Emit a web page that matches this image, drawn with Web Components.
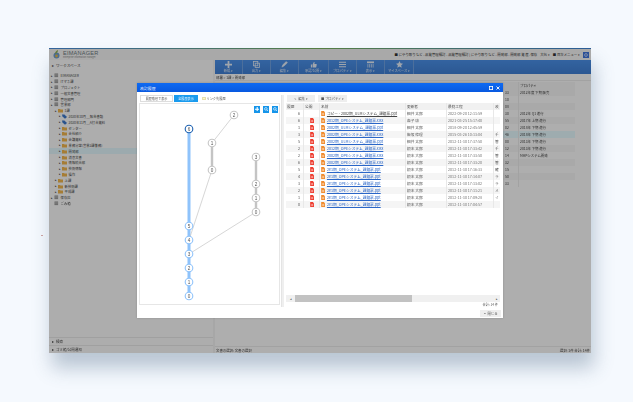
<!DOCTYPE html>
<html lang="ja">
<head>
<meta charset="utf-8">
<title>EIMANAGER</title>
<style>
  html, body { margin: 0; height: 100%; overflow: hidden; }
  body {
    background: #f5f9fe;
    padding: 48px 0 0 49px;
    box-sizing: border-box;
    font-family: "Noto Sans CJK JP", "Liberation Sans", sans-serif;
  }
  /* stray mark left of the window in the screenshot */
  .tick { position: absolute; left: 41px; top: 235px; width: 2px; height: 1px; background: #c9a0a0; }
</style>
</head>
<body>
<em-app></em-app>
<div class="tick"></div>
<script>
const FONT = '"Noto Sans CJK JP", "Liberation Sans", sans-serif';

class EmTopbar extends HTMLElement {
  connectedCallback() {
    this.attachShadow({ mode: 'open' });
    this.shadowRoot.innerHTML = `
      <style>
        :host { display: flex; align-items: center; height: 11px; background: #f2f2f2; padding: 0 2px 0 4px; color: #333; font-size: 3.4px; white-space: nowrap; }
        .logo { display: flex; align-items: center; gap: 3px; }
        .name { font: 400 5.6px "Liberation Sans", sans-serif; letter-spacing: .2px; color: #6b7880; line-height: 6px; }
        .sub { font-size: 2.2px; line-height: 3px; color: #888; }
        .right { margin-left: auto; display: flex; align-items: center; gap: 3px; }
        .gear { width: 6px; height: 6px; background: #3f73d8; display: block; }
      </style>
      <div class="logo">
        <svg width="7" height="9" viewBox="0 0 7 9"><circle cx="3.5" cy="5.5" r="3" fill="#6a9bd0"/><path d="M2 4c0-2 1-3 3-4 0 2-1 3-3 4z" fill="#8cb04a"/><circle cx="3.5" cy="6" r="1.4" fill="#e0b64c"/></svg>
        <div><div class="name">EIMANAGER</div><div class="sub">Enterprise Information Manager</div></div>
      </div>
      <div class="right">
        <span>■ にやり取りなど - 品質管理検討 - 品質管理検討 | にやり取りなど - 開発部 - 開発部 資 産. 保存</span>
        <span>大伝 ▾</span>
        <span>■ 目次メニュー ▾</span>
        <svg class="gear" viewBox="0 0 6 6"><rect width="6" height="6" fill="#3f73d8"/><circle cx="3" cy="3" r="1.4" fill="none" stroke="#dfe8fa" stroke-width=".7"/></svg>
      </div>`;
  }
}

class EmTreeRow extends HTMLElement {
  connectedCallback() {
    const level = +this.getAttribute('level');
    const kind = this.getAttribute('kind') || 'folder';
    const icons = {
      root: '<rect x=".5" y=".5" width="3.6" height="3.6" fill="#8c8c8c"/><path d="M.5 1.7h3.6M.5 2.9h3.6" stroke="#eee" stroke-width=".4"/>',
      folder: '<path d="M0 1h2l.5.6H5v3H0z" fill="#eeb34c"/>',
      tag: '<path d="M0 .6h2.4L5 3 3 4.8.4 2.4z" fill="#3d78c9"/>'
    };
    const arrow = this.hasAttribute('leaf') ? '' : '▸';
    this.attachShadow({ mode: 'open' });
    this.shadowRoot.innerHTML = `
      <style>
        :host { display: flex; align-items: center; height: 5.8px; font-size: 3.3px; color: #444; white-space: nowrap; padding-left: ${[2, 6, 10][level]}px; }
        :host([selected]) { background: #e0f4f9; }
        .arrow { width: 3px; font-size: 3px; color: #333; }
        svg { margin-right: 1.6px; flex: none; }
      </style>
      <span class="arrow">${arrow}</span>
      <svg width="5" height="5" viewBox="0 0 5 5">${icons[kind]}</svg>
      <slot></slot>`;
  }
}

class EmSidebar extends HTMLElement {
  connectedCallback() {
    const tree = [
      [0, 'root', 'EIMANAGER'], [0, 'root', 'ITマネ課'], [0, 'root', 'プロジェクト'],
      [0, 'root', '一般文書管理'], [0, 'root', '管理部門'], [0, 'root', '営業部'],
      [1, 'folder', '1課'],
      [2, 'tag', '2020年10月__報告書類'], [2, 'tag', '2020年11月__A打合資料'],
      [2, 'folder', 'センター'], [2, 'folder', '会社紹介'], [2, 'folder', '会議資料'],
      [2, 'folder', '業務分掌(営業2課兼務)'], [2, 'folder', '開発部', 'sel'],
      [2, 'folder', '消息文書'], [2, 'folder', '情報統合部'], [2, 'folder', '技術情報'], [2, 'folder', '操作'],
      [1, 'folder', '上課'], [1, 'folder', '新技術課'], [1, 'folder', '平成課'],
      [0, 'root', '保存庫'], [0, 'root', 'ごみ箱', 'leaf']
    ];
    this.attachShadow({ mode: 'open' });
    this.shadowRoot.innerHTML = `
      <style>
        :host { display: flex; flex-direction: column; width: 164px; background: #f8f8f8; font-size: 3.5px; color: #444; }
        .head { height: 10px; display: flex; align-items: center; padding-left: 3px; gap: 2px; font-size: 3.6px; }
        .tree { flex: 1; padding-top: 3px; }
        .acc { height: 8px; border-top: 1px solid #e6e6e6; display: flex; align-items: center; padding-left: 3px; gap: 2px; box-sizing: border-box; }
      </style>
      <div class="head"><span>▸</span><span>ワークスペース</span></div>
      <div class="tree">
        ${tree.map(([l, k, t, f]) => `<em-tree-row level="${l}" kind="${k}"${f === 'sel' ? ' selected' : ''}${f === 'leaf' ? ' leaf' : ''}>${t}</em-tree-row>`).join('')}
      </div>
      <div class="acc"><span>▸</span><span>検索</span></div>
      <div class="acc"><span>▸</span><span>ゴミ箱/公開通知</span></div>`;
  }
}

class EmToolbar extends HTMLElement {
  connectedCallback() {
    const items = [
      ['新規 ▾', 28, '<path d="M4 0v8M0 4h8" stroke-width="2"/>'],
      ['出力 ▾', 28, '<rect x=".5" y=".5" width="5" height="5" fill="none" stroke-width=".9"/><rect x="2.5" y="2.5" width="5" height="5" fill="none" stroke-width=".9"/>'],
      ['編集 ▾', 28, '<path d="M1 7l1-2.6L6 .6l1.4 1.4-4 3.8z" stroke-width=".6"/>'],
      ['承認/公開 ▾', 30, '<path d="M1 4h1.4v3.5H1zM3 4l1.4-3c.8 0 1 .6.8 1.4L5 3.4h2.2c.4 0 .6.4.5.8l-.6 2.8c0 .3-.3.5-.6.5H3z" stroke="none"/>'],
      ['プロパティ ▾', 28, '<path d="M0 1.5h8M0 4h8M0 6.5h8" stroke-width="1.2"/>'],
      ['表示 ▾', 28, '<rect y=".5" width="8" height="2" stroke="none"/><path d="M1 3.5v4M3 3.5v4M5 3.5v4M7 3.5v4" stroke-width=".8"/>'],
      ['マイスペース ▾', 29, '<path d="M4 0l1.2 2.7 2.8.3-2.1 1.9.6 2.9L4 6.4 1.5 7.8l.6-2.9L0 3l2.8-.3z" stroke="none"/>']
    ];
    this.attachShadow({ mode: 'open' });
    this.shadowRoot.innerHTML = `
      <style>
        :host { display: flex; height: 14px; background: linear-gradient(#4a8fe6, #3f7ed2); color: #dde7f5; font-size: 3.3px; }
        .btn { display: flex; flex-direction: column; align-items: center; justify-content: center; gap: 1px; box-sizing: border-box; border-right: 1px solid #6d9fe0; white-space: nowrap; }
        svg { width: 7px; height: 7px; fill: #e4ecf7; stroke: #e4ecf7; }
        span { line-height: 4px; }
      </style>
      ${items.map(([t, w, p]) => `<div class="btn" style="width:${w}px"><svg viewBox="0 0 8 8">${p}</svg><span>${t}</span></div>`).join('')}`;
  }
}

class EmDocList extends HTMLElement {
  connectedCallback() {
    const rows = [
      ['33', '2012年度 下期 販売'], ['10', ''], ['08', ''], ['30', '2012年 Q1 進行'], ['55', '2017年 上期 進行'],
      ['02', '2018年 下期 進行'], ['46', '2018年 下期 進行'], ['00', '2013年 下期 進行'], ['12', '2013年 下期 進行'],
      ['14', 'MHPシステム開発'], ['32', ''], ['15', ''], ['50', ''], ['33', '']
    ];
    this.attachShadow({ mode: 'open' });
    this.shadowRoot.innerHTML = `
      <style>
        :host { display: flex; flex-direction: column; flex: 1; min-height: 0; background: #fafafa; color: #444; font-size: 3.4px; }
        .crumb { height: 7px; display: flex; align-items: center; padding-left: 1px; border-bottom: 1px solid #e8e8e8; box-sizing: border-box; }
        .head, .row { display: flex; justify-content: flex-end; margin-right: 16px; }
        .head { height: 7px; margin-top: 1px; align-items: center; background: #f2f2f2; }
        .row { height: 7px; align-items: center; }
        .row:nth-of-type(even) { background: #f3f3f3; }
        .row.sel { background: #e2f6fb; }
        .num { width: 15px; padding-left: 2px; box-sizing: border-box; }
        .txt { width: 57px; padding-left: 1px; box-sizing: border-box; border-left: 1px solid #e9e9e9; height: 100%; display: flex; align-items: center; }
        .list { flex: 1; }
        .status { height: 6px; border-top: 1px solid #e8e8e8; display: flex; justify-content: space-between; align-items: center; padding: 0 1px; }
      </style>
      <div class="crumb">部署 &gt; 1課 &gt; 開発部</div>
      <div class="list">
        <div class="head"><span class="num"></span><span class="txt">プロパティ</span></div>
        ${rows.map(([n, t], i) => `<div class="row${i === 6 ? ' sel' : ''}"><span class="num">${n}</span><span class="txt">${t}</span></div>`).join('')}
      </div>
      <div class="status"><span>文書の選択: 文書の選択</span><span>選択: 1件 合計: 14件</span></div>`;
  }
}

class EmHistoryGraph extends HTMLElement {
  connectedCallback() {
    const blue = [[189, 129, '6'], [189, 226, '5'], [189, 240, '4'], [189, 254, '3'], [189, 268, '2'], [189, 282, '1'], [189, 296, '0']];
    const gray = [[234, 115, '2'], [212, 143, '1'], [212, 170, '0'], [256, 157, '3'], [256, 184, '2'], [256, 198, '1'], [256, 212, '0']];
    const node = ([x, y, t], stroke, w) => `<circle cx="${x}" cy="${y}" r="3.8" fill="#fff" stroke="${stroke}" stroke-width="${w}"/><text x="${x}" y="${y + 1.6}">${t}</text>`;
    this.attachShadow({ mode: 'open' });
    this.shadowRoot.innerHTML = `
      <style>
        :host { display: block; position: relative; height: 202px; box-sizing: border-box; border: 1px solid #e6e6e6; background: #fff; }
        svg { display: block; position: absolute; left: -1px; top: -1px; }
        text { font: 4.6px "Liberation Sans", sans-serif; fill: #555; text-anchor: middle; }
        .tools { position: absolute; top: 2px; right: 1px; display: flex; gap: 2.5px; }
        .tools span { width: 6.5px; height: 6.5px; background: #1695ea; color: #fff; display: flex; align-items: center; justify-content: center; }
        .tools svg { position: static; width: 4.4px; height: 4.4px; }
      </style>
      <svg width="143" height="202" viewBox="139 103 143 202">
        <path d="M189 129V296" stroke="#8fc3fb" stroke-width="3"/>
        <path d="M212 143V170M256 157V212" stroke="#c4c4c4" stroke-width="2.4"/>
        <path d="M234 115L212 143M212 170L189 240M256 212L189 254" stroke="#c4c4c4" stroke-width=".7" fill="none"/>
        ${gray.map(n => node(n, '#c6c6c6', 1.1)).join('')}
        ${blue.map((n, i) => node(n, i ? '#8fc3fb' : '#1a5fb0', 1.1)).join('')}
      </svg>
      <div class="tools">
        <span><svg viewBox="0 0 4 4"><path d="M2 0v4M0 2h4" stroke="#fff" stroke-width="1"/></svg></span>
        <span><svg viewBox="0 0 4 4"><circle cx="1.7" cy="1.7" r="1.2" fill="none" stroke="#fff" stroke-width=".6"/><path d="M2.6 2.6L4 4" stroke="#fff" stroke-width=".6"/></svg></span>
        <span><svg viewBox="0 0 4 4"><circle cx="1.7" cy="1.7" r="1.2" fill="none" stroke="#fff" stroke-width=".6"/><path d="M2.6 2.6L4 4" stroke="#fff" stroke-width=".6"/></svg></span>
      </div>`;
  }
}

class EmVersionTable extends HTMLElement {
  connectedCallback() {
    const rows = [
      ['6', 0, 'コピー - 2002期_ULMシステム_課題票.ppt', '細井 太郎', '2022-09-20 12:11:59', ''],
      ['6', 1, '2012期_OPEシステム_課題票.xlsx', '森子 康', '2021-03-25 15:17:40', ''],
      ['1', 1, '2002期_ULMシステム_課題票.ppt', '細井 太郎', '2018-09-20 12:45:59', ''],
      ['3', 1, '2002期_OPEシステム_課題票.xlsx', '飯坂 修理', '2015-03-26 10:13:04', 'チ'],
      ['5', 1, '2002期_ULMシステム_課題票.ppt', '細井 太郎', '2012-11-30 17:37:50', '管'],
      ['2', 1, '2012期_OPEシステム_課題票.xlsx', '根本 太郎', '2012-11-30 17:33:42', 'チ'],
      ['2', 1, '2002期_OPEシステム_課題票.xlsx', '根本 大郎', '2012-11-30 17:33:50', '管'],
      ['6', 1, '2002期_OPEシステム_課題票.xlsx', '根本 太郎', '2012-11-30 17:33:20', '管'],
      ['5', 1, '2e1期_OPEシステム_課題票.ppt', '根本 大郎', '2012-11-30 17:16:33', '確'],
      ['4', 1, '2e1期_OPEシステム_課題票.ppt', '根本 太郎', '2012-11-30 17:14:07', 'ラ'],
      ['3', 1, '2e1期_OPEシステム_課題票.ppt', '根本 太郎', '2012-11-30 17:13:02', 'ラ'],
      ['2', 1, '2e1期_OPEシステム_課題票.ppt', '根本 大郎', '2012-11-30 17:11:21', 'メ'],
      ['1', 1, '2e1期_OPEシステム_課題票.ppt', '根本 太郎', '2012-11-30 17:09:28', 'イ'],
      ['0', 1, '2e1期_OPEシステム_課題票.ppt', '根本 大郎', '2012-11-30 17:04:57', '']
    ];
    const cols = '18px 16px 86px 41px 47px 6px';
    this.attachShadow({ mode: 'open' });
    this.shadowRoot.innerHTML = `
      <style>
        :host { display: flex; flex-direction: column; height: 199px; font-size: 3.7px; color: #555; white-space: nowrap; overflow: hidden; }
        .tr { display: grid; grid-template-columns: ${cols}; height: 7px; align-items: center; overflow: hidden; }
        .tr > * { border-right: 1px solid #e8e8e8; height: 100%; display: flex; align-items: center; box-sizing: border-box; padding-left: 1px; overflow: hidden; min-width: 0; }
        .tr > *:last-child { border-right: 0; }
        .th { background: #f1f1f1; }
        .body .tr:nth-child(even) { background: #f5f5f5; }
        .n { justify-content: flex-end; padding-right: 3px; }
        .c { justify-content: center; }
        a { color: #2a66c8; text-decoration: underline; }
        a.plain { color: #444; }
        .name { gap: 1.5px; padding-left: 1px; }
        svg { flex: none; }
        .body { flex: 1; }
        .bar { height: 7px; background: #f0f0f0; display: flex; align-items: center; flex: none; font-size: 3px; color: #444; }
        .bar i { font-style: normal; width: 9px; text-align: center; }
        .thumb { width: 117px; height: 100%; background: #c2c2c2; }
        .bar b { margin-left: auto; font-weight: 400; width: 6px; text-align: center; }
      </style>
      <div class="tr th"><span>履歴</span><span>公開</span><span>名前</span><span>更新者</span><span>最終工程</span><span>改</span></div>
      <div class="body">
        ${rows.map(([v, pdf, name, user, date, rem], i) => `
          <div class="tr">
            <span class="n">${v}</span>
            <span class="c">${pdf ? '<svg width="4.4" height="5" viewBox="0 0 4 5"><path d="M0 0h2.6L4 1.4V5H0z" fill="#ee3b2e"/><path d="M1 2.4h2M1 3.6h2" stroke="#fff" stroke-width=".5"/></svg>' : ''}</span>
            <span class="name"><svg width="4.4" height="5" viewBox="0 0 4 5"><path d="M0 0h2.6L4 1.4V5H0z" fill="#f08a2c"/><path d="M1 2.4h2M1 3.6h2" stroke="#fff" stroke-width=".5"/></svg><a class="${i === 0 ? 'plain' : ''}">${name}</a></span>
            <span>${user}</span>
            <span style="color:#777">${date}</span>
            <span>${rem}</span>
          </div>`).join('')}
      </div>
      <div class="bar"><i>◂</i><div class="thumb"></div><b>▸</b></div>`;
  }
}

class EmModal extends HTMLElement {
  connectedCallback() {
    this.attachShadow({ mode: 'open' });
    this.shadowRoot.innerHTML = `
      <style>
        :host { display: flex; flex-direction: column; position: absolute; left: 88px; top: 35px; width: 366px; height: 235px; background: #fff; font-size: 3.7px; color: #555; box-shadow: 0 0 2px rgba(0,0,0,.2); }
        .title { height: 9px; background: linear-gradient(#0e6af2, #0859e0); color: #f2f6ff; display: flex; align-items: center; padding: 0 3px; justify-content: space-between; flex: none; font-size: 3.9px; }
        .wins { display: flex; gap: 3px; }
        .wins svg { display: block; }
        .main { display: flex; padding: 3px 3px 0 2px; flex: none; }
        .left { width: 143px; }
        .split { width: 2px; margin: 0 1px 0 1px; background: #efefef; border-left: 1px solid #e4e4e4; }
        .right { width: 214px; margin-left: 1px; }
        .tabs { height: 7px; margin-bottom: 1px; display: flex; align-items: center; padding-left: 1px; white-space: nowrap; }
        .tab { height: 7px; width: 33px; border: 1px solid #ddd; box-sizing: border-box; display: flex; align-items: center; justify-content: center; background: #fff; font-size: 3.1px; }
        .tab.on { width: 24px; background: #1a9bee; border-color: #1a9bee; color: #e6f4ff; }
        .check { width: 3.5px; height: 3.5px; background: #fdf6c8; border: 1px solid #e4dfae; box-sizing: border-box; margin: 0 1px 0 4px; }
        .tools { height: 7px; margin-bottom: 1px; display: flex; gap: 3px; padding-left: 1px; }
        .tool { height: 7px; background: #eee; display: flex; align-items: center; justify-content: center; font-size: 3.3px; white-space: nowrap; }
        .count { text-align: right; font-size: 3.2px; line-height: 5px; padding-right: 2px; }
        .foot { display: flex; justify-content: flex-end; padding: 3px 2px 0 0; }
        .close { width: 21px; height: 7px; background: #eee; display: flex; align-items: center; justify-content: center; gap: 1px; font-size: 3.4px; }
      </style>
      <div class="title">
        <span>改訂履歴</span>
        <div class="wins">
          <svg width="4" height="4" viewBox="0 0 4 4"><rect x=".4" y=".4" width="3.2" height="3.2" fill="none" stroke="#fff" stroke-width=".8"/></svg>
          <svg width="4" height="4" viewBox="0 0 4 4"><path d="M.5.5l3 3M3.5.5l-3 3" stroke="#fff" stroke-width=".9"/></svg>
        </div>
      </div>
      <div class="main">
        <div class="left">
          <div class="tabs">
            <span class="tab">履歴階層で表示</span><span class="tab on" style="margin-left:1px">全履歴表示</span>
            <span class="check"></span><span style="font-size:3.2px">リンク先履歴</span>
          </div>
          <em-history-graph></em-history-graph>
        </div>
        <div class="split"></div>
        <div class="right">
          <div class="tools">
            <span class="tool" style="width:28px">✎ 編集 ▾</span>
            <span class="tool" style="width:29px">■ プロパティ ▾</span>
          </div>
          <em-version-table></em-version-table>
          <div class="count">合計: 14 件</div>
        </div>
      </div>
      <div class="foot"><span class="close">▪ 閉じる</span></div>`;
  }
}

class EmApp extends HTMLElement {
  connectedCallback() {
    this.attachShadow({ mode: 'open' });
    this.shadowRoot.innerHTML = `
      <style>
        :host { display: flex; flex-direction: column; position: relative; width: 542px; height: 305px; background: #f8f8f8; font-family: ${FONT}; box-shadow: 3px 15px 18px rgba(60,90,120,.32); filter: blur(.35px); }
        .line { height: 1px; flex: none; background: linear-gradient(90deg, #4a90e2, #7bb662 50%, #3f86da); }
        .body { flex: 1; display: flex; min-height: 0; }
        .split { width: 2px; background: #f0f0f0; flex: none; }
        .main { flex: 1; display: flex; flex-direction: column; min-width: 0; }
        .mask { position: absolute; inset: 0; background: rgba(0,0,0,.3); }
      </style>
      <div class="line"></div>
      <em-topbar></em-topbar>
      <div class="body">
        <em-sidebar></em-sidebar>
        <div class="split"></div>
        <div class="main">
          <em-toolbar></em-toolbar>
          <em-doc-list></em-doc-list>
        </div>
      </div>
      <div class="mask"></div>
      <em-modal></em-modal>`;
  }
}

customElements.define('em-topbar', EmTopbar);
customElements.define('em-tree-row', EmTreeRow);
customElements.define('em-sidebar', EmSidebar);
customElements.define('em-toolbar', EmToolbar);
customElements.define('em-doc-list', EmDocList);
customElements.define('em-history-graph', EmHistoryGraph);
customElements.define('em-version-table', EmVersionTable);
customElements.define('em-modal', EmModal);
customElements.define('em-app', EmApp);
</script>
</body>
</html>
